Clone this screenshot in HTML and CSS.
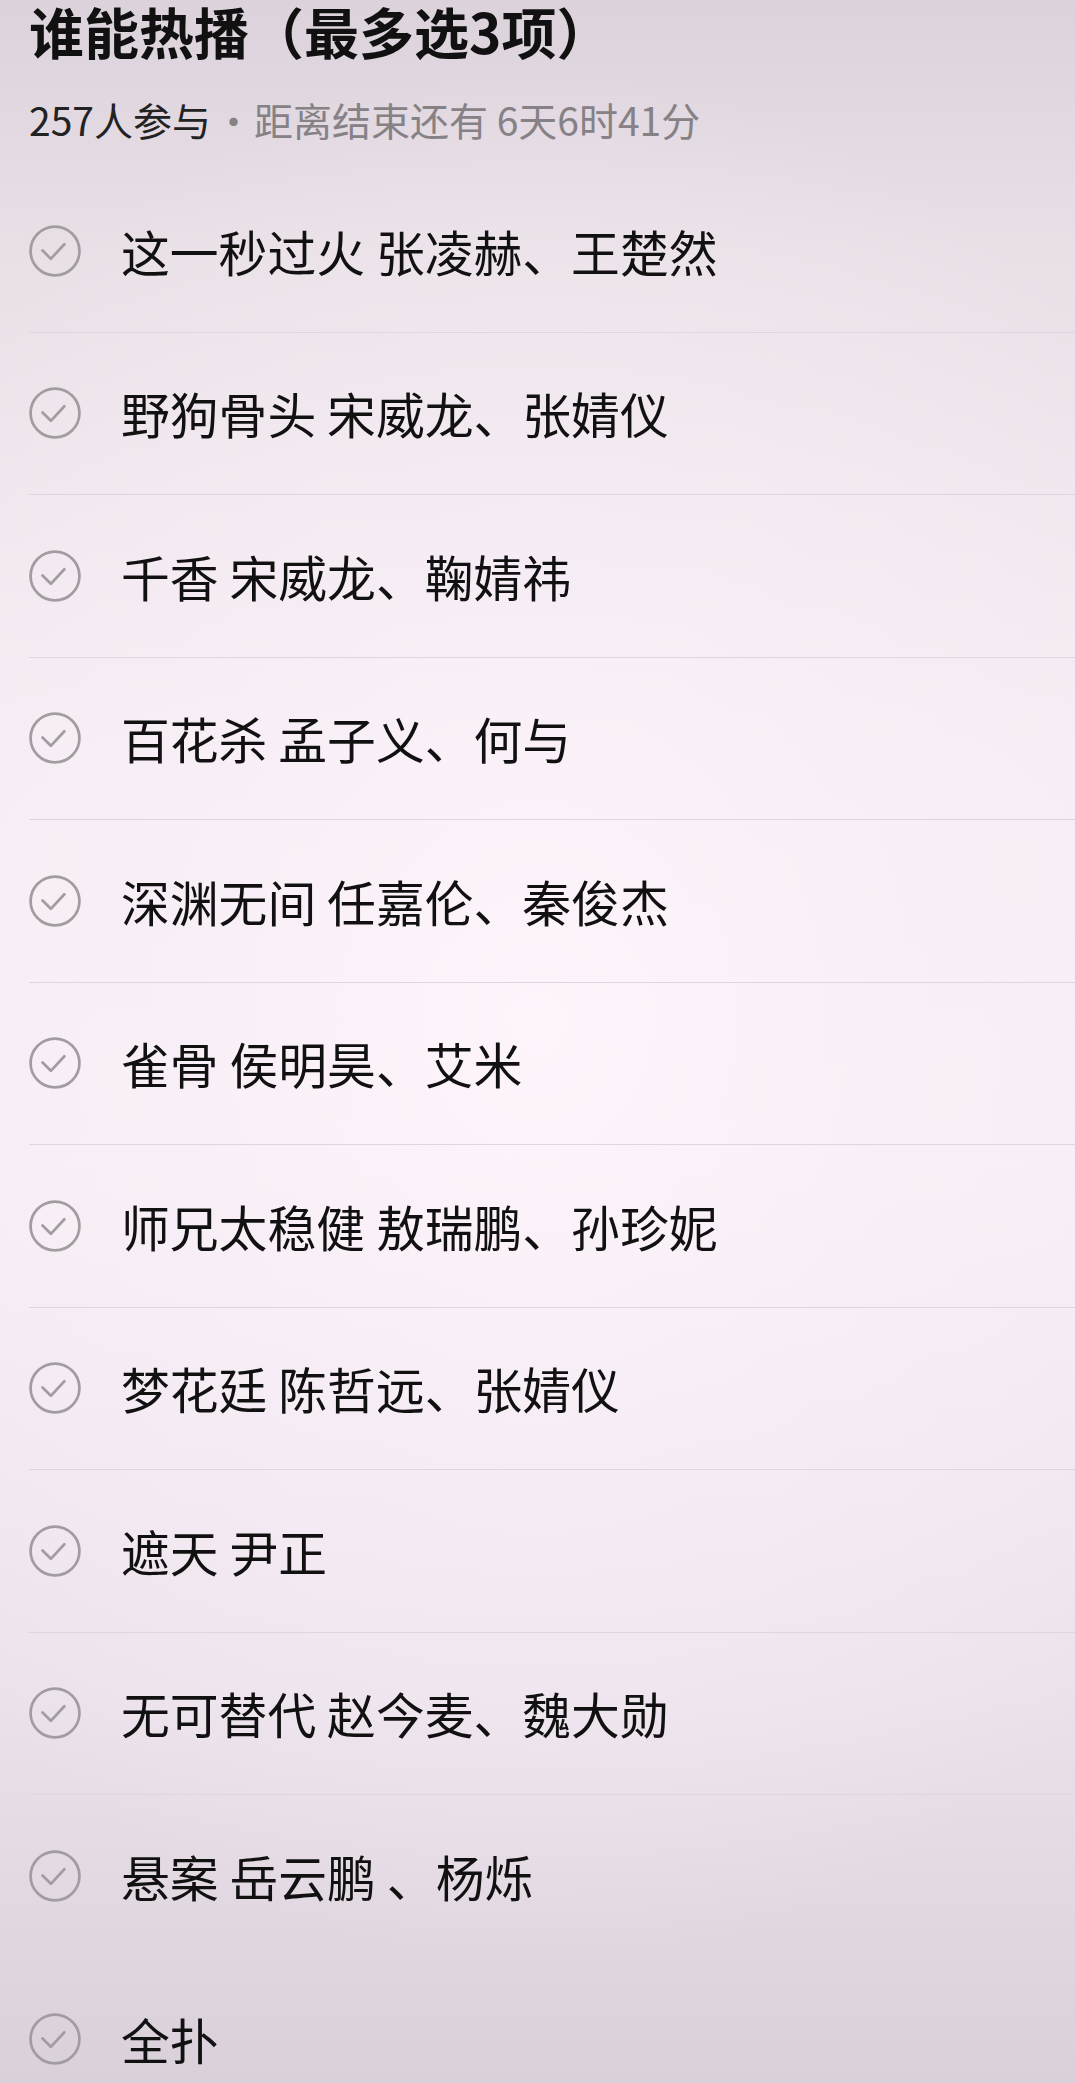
FILE: index.html
```html
<!DOCTYPE html>
<html lang="zh-CN">
<head>
<meta charset="utf-8">
<title>谁能热播（最多选3项）</title>
<link rel="stylesheet" href="styles.css">
</head>
<body>
<main class="page">
  <h1 class="title">谁能热播（最多选3项）</h1>
  <p class="meta"><span class="count">257人参与</span><span class="dot">·</span><span class="rest">距离结束还有 6天6时41分</span></p>
  <ul class="options">
    <li class="option"><svg class="check" viewBox="0 0 50 50"><circle cx="25" cy="25" r="23.5"/><polyline points="13,24.5 21,32.5 34,18.5"/></svg><span class="label">这一秒过火 张凌赫、王楚然</span></li>
    <li class="option"><svg class="check" viewBox="0 0 50 50"><circle cx="25" cy="25" r="23.5"/><polyline points="13,24.5 21,32.5 34,18.5"/></svg><span class="label">野狗骨头 宋威龙、张婧仪</span></li>
    <li class="option"><svg class="check" viewBox="0 0 50 50"><circle cx="25" cy="25" r="23.5"/><polyline points="13,24.5 21,32.5 34,18.5"/></svg><span class="label">千香 宋威龙、鞠婧祎</span></li>
    <li class="option"><svg class="check" viewBox="0 0 50 50"><circle cx="25" cy="25" r="23.5"/><polyline points="13,24.5 21,32.5 34,18.5"/></svg><span class="label">百花杀 孟子义、何与</span></li>
    <li class="option"><svg class="check" viewBox="0 0 50 50"><circle cx="25" cy="25" r="23.5"/><polyline points="13,24.5 21,32.5 34,18.5"/></svg><span class="label">深渊无间 任嘉伦、秦俊杰</span></li>
    <li class="option"><svg class="check" viewBox="0 0 50 50"><circle cx="25" cy="25" r="23.5"/><polyline points="13,24.5 21,32.5 34,18.5"/></svg><span class="label">雀骨 侯明昊、艾米</span></li>
    <li class="option"><svg class="check" viewBox="0 0 50 50"><circle cx="25" cy="25" r="23.5"/><polyline points="13,24.5 21,32.5 34,18.5"/></svg><span class="label">师兄太稳健 敖瑞鹏、孙珍妮</span></li>
    <li class="option"><svg class="check" viewBox="0 0 50 50"><circle cx="25" cy="25" r="23.5"/><polyline points="13,24.5 21,32.5 34,18.5"/></svg><span class="label">梦花廷 陈哲远、张婧仪</span></li>
    <li class="option"><svg class="check" viewBox="0 0 50 50"><circle cx="25" cy="25" r="23.5"/><polyline points="13,24.5 21,32.5 34,18.5"/></svg><span class="label">遮天 尹正</span></li>
    <li class="option"><svg class="check" viewBox="0 0 50 50"><circle cx="25" cy="25" r="23.5"/><polyline points="13,24.5 21,32.5 34,18.5"/></svg><span class="label">无可替代 赵今麦、魏大勋</span></li>
    <li class="option"><svg class="check" viewBox="0 0 50 50"><circle cx="25" cy="25" r="23.5"/><polyline points="13,24.5 21,32.5 34,18.5"/></svg><span class="label">悬案 岳云鹏 、杨烁</span></li>
    <li class="option"><svg class="check" viewBox="0 0 50 50"><circle cx="25" cy="25" r="23.5"/><polyline points="13,24.5 21,32.5 34,18.5"/></svg><span class="label">全扑</span></li>
  </ul>
</main>
</body>
</html>
```
FILE: styles.css
```css
html, body {
  margin: 0;
  padding: 0;
}

body {
  min-height: 2083px;
  font-family: "Noto Sans CJK SC", "Noto Sans", sans-serif;
  color: #111;
  background-color: #ece2eb;
  background-image:
    radial-gradient(ellipse 75% 45% at 50% 48%, rgba(253, 244, 252, 0.95) 0%, rgba(250, 240, 249, 0.6) 45%, rgba(250, 240, 249, 0) 100%),
    linear-gradient(180deg, #dbd2db 0%, #e8dfe7 12%, #f4ebf3 35%, #f6edf5 55%, #ebe1ea 80%, #d8ced8 100%);
  overflow: hidden;
}

.page {
  padding-left: 29px;
  padding-top: 2px;
}

.title {
  margin: 0;
  font-size: 55px;
  line-height: 56px;
  font-weight: 700;
  color: #111;
}

.meta {
  margin: 38px 0 0;
  font-size: 39px;
  line-height: 46px;
  white-space: nowrap;
}

.count {
  color: #222;
}

.dot {
  color: #858185;
  margin: 0 1px 0 3px;
}

.rest {
  color: #858185;
}

.options {
  list-style: none;
  margin: 28px 0 0;
  padding: 0;
}

.option {
  box-sizing: border-box;
  height: 162.5px;
  display: flex;
  align-items: center;
  gap: 40px;
  border-bottom: 1.5px solid #dfd5de;
}

.option:last-child {
  border-bottom: none;
}

.check {
  flex: none;
  width: 52px;
  height: 52px;
  fill: none;
  stroke: #a09ca0;
  stroke-width: 2.6;
  stroke-linecap: round;
  stroke-linejoin: round;
}

.label {
  font-size: 48.8px;
  line-height: 60px;
  color: #111;
  white-space: nowrap;
}
```
